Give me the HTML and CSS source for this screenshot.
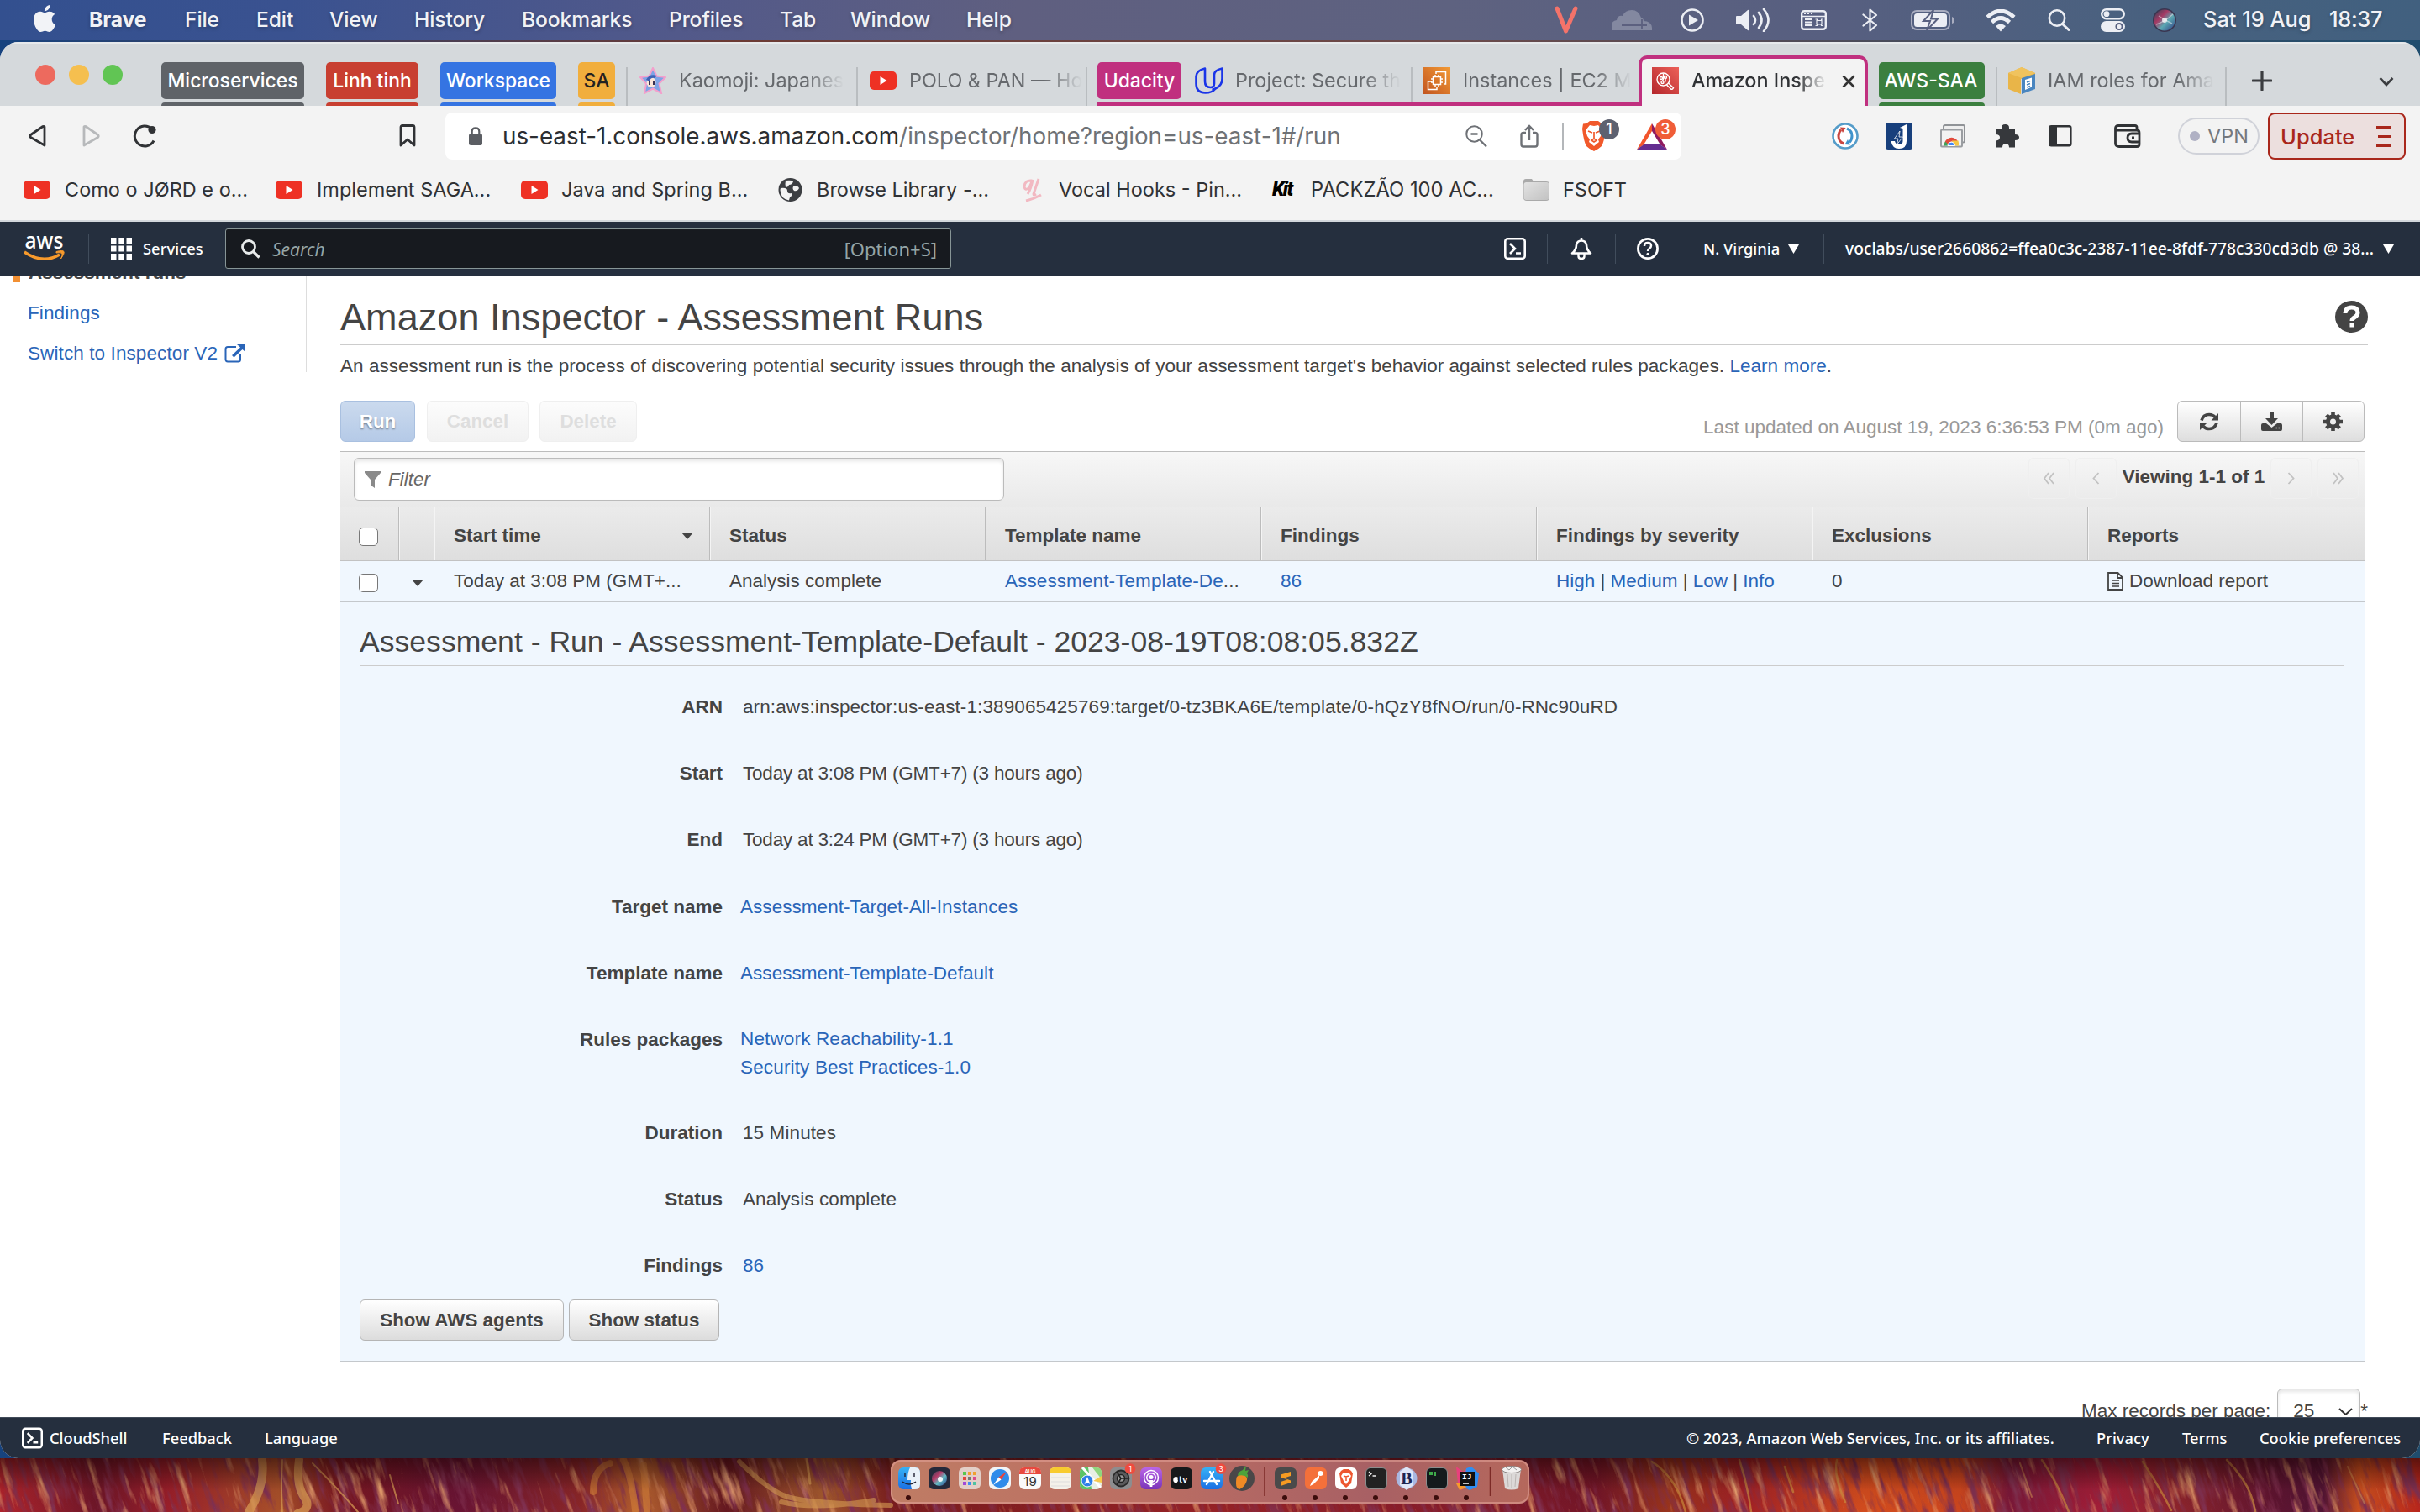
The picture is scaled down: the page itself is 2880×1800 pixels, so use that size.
FILE: index.html
```html
<!DOCTYPE html>
<html lang="en">
<head>
<meta charset="utf-8">
<title>Amazon Inspector</title>
<link rel="stylesheet" href="styles.css">
</head>
<body>
<div class="desktop">

<header class="menubar">
  <nav class="menu-left">
    <svg class="apple" width="26" height="32" viewBox="2.2 0 19.6 24" preserveAspectRatio="none"><path fill="#f2f3f7" d="M12.152 6.896c-.948 0-2.415-1.078-3.96-1.04-2.04.027-3.91 1.183-4.961 3.014-2.117 3.675-.546 9.103 1.519 12.09 1.013 1.454 2.208 3.09 3.792 3.039 1.52-.065 2.09-.987 3.935-.987 1.831 0 2.35.987 3.96.948 1.637-.026 2.676-1.48 3.676-2.948 1.156-1.688 1.636-3.325 1.662-3.415-.039-.013-3.182-1.221-3.22-4.857-.026-3.04 2.48-4.494 2.597-4.559-1.429-2.09-3.623-2.324-4.39-2.376-2-.156-3.675 1.09-4.61 1.09zM15.53 3.83c.843-1.012 1.4-2.427 1.245-3.83-1.207.052-2.662.805-3.532 1.818-.78.896-1.454 2.338-1.273 3.714 1.338.104 2.715-.688 3.559-1.701"/></svg>
    <b>Brave</b><span>File</span><span>Edit</span><span>View</span><span>History</span><span>Bookmarks</span><span>Profiles</span><span>Tab</span><span>Window</span><span>Help</span>
  </nav>
  <div class="menu-right">
    <svg width="28" height="34" viewBox="0 0 28 34"><path d="M3 3 L13.5 30 L25 3" fill="none" stroke="#f4736a" stroke-width="5" stroke-linejoin="round" stroke-linecap="round"/></svg>
    <svg width="48" height="26" viewBox="0 0 48 26"><path d="M0 25V19q0-5 6-6 1-6 7-5Q16 1 24 1t11 9q3 1 3 4 9 0 10 8v3z" fill="#8388a0"/><path d="M12 19h30M36 12v12" stroke="#5c607f" stroke-width="1.800"/></svg>
    <svg width="28" height="28" viewBox="0 0 28 28"><circle cx="14" cy="14" r="12.5" fill="none" stroke="#eceef4" stroke-width="2.6"/><path d="M10 7.5l11 6.5-11 6.500z" fill="#eceef4"/></svg>
    <svg width="41" height="28" viewBox="0 0 41 28"><path d="M0 10q0-1 1-1h5l8-7q2-1 2 1v22q0 2-2 1l-8-7H1q-1 0-1-1z" fill="#eceef4"/><path d="M21 9q4 5 0 10M27 5q7 9 0 18M33 1q11 13 0 26" fill="none" stroke="#eceef4" stroke-width="2.6" stroke-linecap="round"/></svg>
    <svg width="31" height="24" viewBox="0 0 31 24"><rect x="1.200" y="1.200" width="28.600" height="21.600" rx="3" fill="none" stroke="#eceef4" stroke-width="2.4"/><path d="M1 7.500h29" stroke="#eceef4" stroke-width="1.500"/><path d="M4 4h2M8 4h2M12 4h2" stroke="#eceef4" stroke-width="2"/><path d="M5 11h9M5 14.500h9M5 18h9" stroke="#eceef4" stroke-width="1.800"/><path d="M19 12.500h6v4.500h-6zM17.500 11h2v2M26.500 11h-2v2M17.500 18.500h2v-2M26.500 18.500h-2v-2" fill="none" stroke="#eceef4" stroke-width="1.200"/></svg>
    <svg width="19" height="28" viewBox="0 0 19 28"><path d="M1.500 7.500L17 20l-7.500 6.500v-25L17 8 1.500 20.500" fill="none" stroke="#eceef4" stroke-width="2.200" stroke-linejoin="round" stroke-linecap="round"/></svg>
    <svg width="52" height="24" viewBox="0 0 52 24"><rect x="1" y="1" width="45" height="22" rx="6" fill="none" stroke="#a9adc0" stroke-width="2"/><rect x="4" y="4" width="39" height="16" rx="3.500" fill="#eceef4"/><path d="M49 8q3 1 3 4t-3 4z" fill="#a9adc0"/><path d="M27 0L15 13h8l-4 11L32 10.500h-8z" fill="#eceef4" stroke="#586080" stroke-width="2"/></svg>
    <svg width="36" height="27" viewBox="0 0 36 27"><path d="M2 9.500q16-15 32 0M7.500 15.500q10.500-10 21 0" fill="none" stroke="#eceef4" stroke-width="4.600"/><path d="M12 20q6-5 12 0l-6 6.500z" fill="#eceef4"/></svg>
    <svg width="27" height="26" viewBox="0 0 27 26"><circle cx="11" cy="10.500" r="9.200" fill="none" stroke="#eceef4" stroke-width="2.600"/><path d="M17.500 17.500l7.500 7" stroke="#eceef4" stroke-width="3" stroke-linecap="round"/></svg>
    <svg width="29" height="28" viewBox="0 0 29 28"><rect x="1.200" y="1.200" width="26.600" height="11" rx="5.500" fill="none" stroke="#eceef4" stroke-width="2.400"/><circle cx="7" cy="6.700" r="3.400" fill="#eceef4"/><rect x="0" y="15" width="29" height="13" rx="6.500" fill="#eceef4"/><circle cx="22" cy="21.500" r="3.600" fill="none" stroke="#566080" stroke-width="2"/></svg>
    <svg width="28" height="28" viewBox="0 0 28 28"><defs><linearGradient id="siri" x1="0" y1="0" x2="1" y2="1"><stop offset="0" stop-color="#2a4456"/><stop offset=".35" stop-color="#b93a68"/><stop offset=".6" stop-color="#62bcc4"/><stop offset="1" stop-color="#2a3b8c"/></linearGradient></defs><circle cx="14" cy="14" r="14" fill="#3a3550"/><circle cx="14" cy="14" r="12.500" fill="url(#siri)" opacity=".85"/><path d="M4 19q10-3 20-12M7 9q7 5 16 9" stroke="#fff" stroke-width="1.400" fill="none" opacity=".45"/><circle cx="14" cy="14" r="3" fill="#fff" opacity=".75"/></svg>
    <span>Sat 19 Aug</span><span class="clock">18:37</span>
  </div>
</header>

<main class="window">
  <div class="tabstrip">
    <div class="lights"><i class="red"></i><i class="yellow"></i><i class="green"></i></div>
    <div class="groups">
      <div class="chip gray w170"><span>Microservices</span></div>
      <div class="chip crimson w110"><span>Linh tinh</span></div>
      <div class="chip blue w138"><span>Workspace</span></div>
      <div class="chip amber w44"><span>SA</span></div>
    </div>
    <div class="tab">
      <svg width="32" height="32" viewBox="0 0 32 32"><path d="M16 1l4.500 9.500L31 12l-7.500 7.500L26 31l-10-5.500L6 31l2-11.500L1 12l10.500-1.500z" fill="#7fa4e6" stroke="#f3a0cc" stroke-width="2"/><ellipse cx="14" cy="18" rx="5.500" ry="6" fill="#fbe6da"/><path d="M8 15q4-8 13-5l-3 3q-5-1-6 4z" fill="#3f62b5"/><path d="M12 17v4M17 17v4" stroke="#3a3050" stroke-width="2"/></svg>
      <span class="tab-text">Kaomoji: Japanes</span>
    </div>
    <div class="tab last">
      <svg class="yt" width="32" height="22" viewBox="0 0 32 22"><rect width="32" height="22" rx="5" fill="#ee3124"/><path d="M12.500 6l8 5-8 5z" fill="#fff"/></svg>
      <span class="tab-text">POLO &amp; PAN — Ho</span>
    </div>
    <div class="group-open">
      <div class="chip magenta w100"><span>Udacity</span></div>
      <div class="tab plain">
        <svg width="34" height="32" viewBox="0 0 34 32"><path d="M12 1.500Q1.500 4 1.500 11v8.500q0 11 11 11 8 0 12-5 8-3.500 8-12V1.500Q23 3.500 23 9v10.500q0 4.500-4.500 4.500-6.500 0-6.500-7zM24.500 25.500q-2 1-4 1.500" fill="none" stroke="#1a35e8" stroke-width="2.600" stroke-linejoin="round"/></svg>
        <span class="tab-text">Project: Secure th</span>
      </div>
      <div class="tab ec2">
        <svg width="32" height="32" viewBox="0 0 32 32"><defs><linearGradient id="ec" x1="0" y1="1" x2="1" y2="0"><stop offset="0" stop-color="#c2551f"/><stop offset="1" stop-color="#f29a35"/></linearGradient></defs><rect width="32" height="32" fill="url(#ec)"/><g fill="none" stroke="#fff" stroke-width="1.500"><rect x="11.500" y="11.500" width="9" height="9"/><path d="M14 9v2M18 9v2M14 21v2M18 21v2M9 14h2M9 18h2M21 14h2M21 18h2M15 8V5.500h11.500V20H24M10 17H5.500v9.500H16V24"/></g></svg>
        <span class="tab-text">Instances | EC2 M</span>
      </div>
    </div>
    <div class="tab-active">
      <svg width="32" height="32" viewBox="0 0 32 32"><defs><linearGradient id="ins" x1="0" y1="1" x2="1" y2="0"><stop offset="0" stop-color="#b4262b"/><stop offset="1" stop-color="#ec6058"/></linearGradient></defs><rect width="32" height="32" fill="url(#ins)"/><g fill="none" stroke="#fff" stroke-width="1.400"><circle cx="13.500" cy="14.500" r="7.500"/><circle cx="11" cy="13" r="1.500"/><circle cx="16" cy="12" r="1.500"/><circle cx="12.500" cy="18" r="1.500"/><path d="M13.500 7.500v6.500l-1 2.500M16 13.500v4M19.500 19l6 5.500q-1 2.500-3 1.500l-5-5"/></g></svg>
      <span class="tab-text">Amazon Inspe</span>
      <svg class="close" width="16" height="16" viewBox="0 0 16 16"><path d="M1.500 1.500l13 13M14.500 1.500l-13 13" stroke="#333" stroke-width="2.600"/></svg>
    </div>
    <div class="chip green-c w126"><span>AWS-SAA</span></div>
    <div class="tab last iam">
      <svg width="32" height="32" viewBox="0 0 32 32"><path d="M0 7L16 0l16 7v3L15 14v18L0 26z" fill="#e9b548"/><path d="M16 0l16 7-16 6L0 7z" fill="#f0c35e"/><path d="M16 13l16-5v18l-16 6z" fill="#4a86c0"/><path d="M20 15l8-2.500v11L20 27z" fill="#fff"/><path d="M22 18l4-1.500M22 21l4-1.500M22 24l4-1.500" stroke="#4a86c0" stroke-width="1.500"/></svg>
      <span class="tab-text">IAM roles for Ama</span>
    </div>
    <svg class="plus" width="24" height="24" viewBox="0 0 24 24"><path d="M12 1v22M1 12h22" stroke="#3b3d40" stroke-width="3.200" stroke-linecap="round"/></svg>
    <svg class="chev" width="18" height="12" viewBox="0 0 18 12"><path d="M1.500 2L9 10l7.500-8" fill="none" stroke="#3b3d40" stroke-width="2.600"/></svg>
  </div>

  <div class="toolbar">
    <div class="nav-icons">
      <svg width="21" height="28" viewBox="0 0 21 28"><path d="M19 3v22L2.500 15.500q-1.500-1.500 0-3L17 2.500q2-.5 2 1z" fill="none" stroke="#303235" stroke-width="2.800" stroke-linejoin="round"/></svg>
      <svg width="21" height="28" viewBox="0 0 21 28"><path d="M2 3v22l16.500-9.500q1.500-1.500 0-3L4 2.500q-2-.5-2 1z" fill="none" stroke="#b7b9bb" stroke-width="2.800" stroke-linejoin="round"/></svg>
      <svg width="28" height="28" viewBox="0 0 28 28"><path d="M25 19.500A12 12 0 1 1 22.500 5.200" fill="none" stroke="#303235" stroke-width="3"/><circle cx="23" cy="6.500" r="4.600" fill="#303235"/></svg>
      <svg class="bm" width="20" height="28" viewBox="0 0 20 28"><path d="M2 3.500q0-2 2-2h12q2 0 2 2V25l-8-7-8 7z" fill="none" stroke="#303235" stroke-width="2.800" stroke-linejoin="round"/></svg>
    </div>
    <div class="address">
      <svg width="16" height="22" viewBox="0 0 16 22"><rect y="8" width="16" height="14" rx="2.500" fill="#5b5e63"/><path d="M3.700 9V5.500q0-4.200 4.300-4.200t4.300 4.200V9" fill="none" stroke="#5b5e63" stroke-width="2.200"/></svg>
      <div class="url"><span class="host">us-east-1.console.aws.amazon.com</span>/inspector/home?region=us-east-1#/run</div>
      <div class="addr-icons">
        <svg width="26" height="27" viewBox="0 0 26 27"><circle cx="10.500" cy="10.500" r="9.300" fill="none" stroke="#6e7176" stroke-width="2"/><path d="M6.500 10.500h8M17 17.500l8 8" stroke="#6e7176" stroke-width="2.400"/></svg>
        <svg width="22" height="28" viewBox="0 0 22 28"><path d="M7 10H4q-2.500 0-2.500 2.500V24q0 2.500 2.500 2.500h14q2.500 0 2.500-2.500V12.500Q20.500 10 18 10h-3M11 19V2M6 7l5-5 5 5" fill="none" stroke="#6e7176" stroke-width="2.400"/></svg>
        <i class="vline"></i>
        <div class="badged">
          <svg width="28" height="36" viewBox="0 0 28 36"><path d="M5 3l4-3h10l4 3 4 .5 1 6q-2 16-5 20.500Q20 33 14 36 8 33 5 30 2 25.500 0 9.500l1-6z" fill="#f1592b"/><path d="M14 6l5-1 5 6-2 7-3 4 1 3-6 5-6-5 1-3-3-4-2-7 5-6z" fill="#fff"/><path d="M7 12l5 2M21 12l-5 2M14 13v8l-3 2 3 2 3-2-3-2" stroke="#f1592b" stroke-width="1.700" fill="none"/></svg>
          <b class="badge slate">1</b>
        </div>
        <div class="badged tri">
          <svg width="36" height="32" viewBox="0 0 36 32"><path d="M18 1L0 32l8-5.500L18 10z" fill="#f2552c"/><path d="M18 1l18 31-8-5.500L18 10z" fill="#8f1a5f"/><path d="M0 32l9-6.500h18L36 32z" fill="#652d90"/></svg>
          <b class="badge orange">3</b>
        </div>
      </div>
    </div>
    <div class="ext">
      <svg width="32" height="32" viewBox="0 0 32 32"><circle cx="16" cy="16" r="14.500" fill="#fff" stroke="#559cc9" stroke-width="2.600"/><path d="M14 25q-6-2.500-6-9 0-4.500 3-7.500" fill="none" stroke="#c9453f" stroke-width="3"/><path d="M10 5.500l6.500.5-3.500 6z" fill="#c9453f"/><path d="M18 7q6 2.500 6 9 0 4.500-3 7.500" fill="none" stroke="#3f93cc" stroke-width="3"/><path d="M22 26.500l-6.500-.5 3.500-6z" fill="#3f93cc"/></svg>
      <svg width="32" height="32" viewBox="0 0 32 32"><rect width="32" height="32" rx="3" fill="#173f7c"/><path d="M17 6l8-4v20q0 9-9 9-8 0-9.500-9H11q1 4 5 4 4.500 0 4.500-4V7z" fill="#fff"/><path d="M17 10l-6.500 9h4.500l-1.500 7 7-9h-4.500z" fill="#173f7c" stroke="#fff" stroke-width=".8"/></svg>
      <svg width="31" height="28" viewBox="0 0 31 28"><path d="M4 6V2.500Q4 1 6 1h21.500Q29 1 29 3v17q0 1.500-2 1.500h-1" fill="#eee" stroke="#909397" stroke-width="2"/><rect x="1" y="6.500" width="25" height="20" rx="1" fill="#f2f2f2" stroke="#9a9da1" stroke-width="2"/><path d="M5 25.500a8.500 8.500 0 0 1 16-5H13z" fill="#e24b3c"/><path d="M4.800 25.500q0-3 1.200-5l5 5z" fill="#3ba55a"/><path d="M14 19.500h7.500q1 3 .3 6H15z" fill="#f6c643"/><path d="M9 25.500a4.200 4.200 0 0 1 8.500 0z" fill="#4285f4" stroke="#fff" stroke-width="1"/></svg>
      <svg width="29" height="28" viewBox="0 0 29 28"><path d="M1 5h7q-.5-5 4.500-5T17 5h7v7q5 0 5 3.500T24 19v8.500h-7q0-4.500-4-4.500t-4 4.500H1.500v-8Q6 19 6 15.500T1 12z" fill="#36383c"/></svg>
      <svg width="28" height="26" viewBox="0 0 28 26"><rect x="1.300" y="1.300" width="25" height="23" rx="2" fill="none" stroke="#303235" stroke-width="2.600"/><path d="M2 2h8v22H2z" fill="#303235"/></svg>
      <svg width="32" height="28" viewBox="0 0 32 28"><path d="M27 6V3.500q0-2-2-2H5q-3.500 0-3.500 3T5 7h22q3 0 3 3v14q0 2.500-3 2.500H6q-4.500 0-4.500-4V4.500M30 11h-9q-5 0-5 5t5 5h9M21 16h3" fill="none" stroke="#303235" stroke-width="2.800"/></svg>
    </div>
    <div class="vpn"><i></i>VPN</div>
    <div class="update"><span>Update</span><svg width="17" height="25" viewBox="0 0 17 25"><path d="M0 1.500h17M2 12.500h15M0 23.500h17" stroke="#a9271b" stroke-width="3"/></svg></div>
  </div>

  <div class="bookmarks">
    <svg width="32" height="22" viewBox="0 0 32 22"><rect width="32" height="22" rx="5" fill="#ee3124"/><path d="M12.500 6l8 5-8 5z" fill="#fff"/></svg><span>Como o JØRD e o...</span>
    <svg width="32" height="22" viewBox="0 0 32 22"><rect width="32" height="22" rx="5" fill="#ee3124"/><path d="M12.500 6l8 5-8 5z" fill="#fff"/></svg><span>Implement SAGA...</span>
    <svg width="32" height="22" viewBox="0 0 32 22"><rect width="32" height="22" rx="5" fill="#ee3124"/><path d="M12.500 6l8 5-8 5z" fill="#fff"/></svg><span>Java and Spring B...</span>
    <svg width="29" height="28" viewBox="0 0 29 28"><circle cx="14.500" cy="14" r="14" fill="#3c3e42"/><path d="M3 12q8-1 8 3t5 3q1 3-2 5-1 3-1 3.500Q3 25 2.500 14zM9 3q7-1 9 1-1 4-5 4-1 3-4 3-1-4 0-8zM19 9q5 0 6 3-2 4-6 3-3-3 0-6z" fill="#f3f3f3"/></svg><span>Browse Library -...</span>
    <svg width="24" height="28" viewBox="0 0 24 28"><path d="M11 3q-8-1-9 7 1 6 6 1l4-9q-2 11-6 17M19 1l-6 18q0 2 3 0M4 27q9-2 18-7" fill="none" stroke="#f2b9c2" stroke-width="3"/></svg><span>Vocal Hooks - Pin...</span>
    <span class="kit">Kit</span><span class="pack">PACKZÃO 100 AC...</span>
    <svg width="31" height="26" viewBox="0 0 31 26"><defs><linearGradient id="fo" x1="0" y1="0" x2="1" y2="1"><stop offset="0" stop-color="#e2e2e2"/><stop offset="1" stop-color="#c2c2c2"/></linearGradient></defs><path d="M0 3q0-3 3-3h7l2 3h15q4 0 4 3v16q0 4-4 4H4q-4 0-4-4z" fill="#a9a9a9"/><rect x=".5" y="4" width="30" height="21" rx="3" fill="url(#fo)"/></svg><span>FSOFT</span>
  </div>

  <div class="awsnav">
    <svg class="aws" width="49" height="33" viewBox="0 0 49 33"><text x="24.500" y="15.500" text-anchor="middle" font-family="Noto Sans" font-weight="500" font-size="27" textLength="46" lengthAdjust="spacingAndGlyphs" fill="#fff">aws</text><path d="M1 20q22 15 42 3" fill="none" stroke="#f79a2c" stroke-width="3.400"/><path d="M39 19.500q8-2 9 0t-3.500 8.500q2-4 1.500-6.500-2-1.500-7-.5z" fill="#f79a2c" stroke="#f79a2c" stroke-width="1"/></svg>
    <i class="nsep s1"></i>
    <svg class="grid9" width="25" height="26" viewBox="0 0 25 26"><path fill="#fff" d="M0 0h6.500v7H0zM9.300 0h6.500v7H9.300zM18.500 0H25v7h-6.500zM0 9.500h6.500v7H0zM9.300 9.500h6.500v7H9.300zM18.500 9.500H25v7h-6.500zM0 19h6.500v7H0zM9.300 19h6.500v7H9.300zM18.500 19H25v7h-6.500z"/></svg>
    <span class="services">Services</span>
    <div class="search">
      <svg width="23" height="23" viewBox="0 0 23 23"><circle cx="9" cy="9" r="7.500" fill="none" stroke="#e8ebeb" stroke-width="2.800"/><path d="M14.500 14.500l7 7" stroke="#e8ebeb" stroke-width="3.200"/></svg>
      <em>Search</em><span>[Option+S]</span>
    </div>
    <div class="nav-right">
      <svg width="26" height="26" viewBox="0 0 26 26"><rect x="1.300" y="1.300" width="23.400" height="23.400" rx="3" fill="none" stroke="#fff" stroke-width="2.600"/><path d="M7 7l6 6-6 6M14 18.500h6" fill="none" stroke="#fff" stroke-width="2.600"/></svg>
      <i class="nsep"></i>
      <svg width="26" height="26" viewBox="0 0 26 26"><path d="M13 0v3M2 18.500q5-4 5-10Q8 3.500 13 3.500t6 5q0 6 5 10z" fill="none" stroke="#fff" stroke-width="2.600" stroke-linejoin="round"/><path d="M9.500 19v3q0 3 3.500 3t3.500-3v-3" fill="none" stroke="#fff" stroke-width="2.400"/></svg>
      <i class="nsep"></i>
      <svg width="26" height="26" viewBox="0 0 26 26"><circle cx="13" cy="13" r="11.600" fill="none" stroke="#fff" stroke-width="2.700"/><path d="M9 10q0-4 4-4t4 3.500q0 2-2 3.300T13 16" fill="none" stroke="#fff" stroke-width="2.500"/><circle cx="13" cy="19.300" r="1.500" fill="#fff"/></svg>
      <i class="nsep"></i>
      <span>N. Virginia</span>
      <svg width="13" height="11" viewBox="0 0 13 11"><path d="M0 0h13L6.500 11z" fill="#fff"/></svg>
      <i class="nsep"></i>
      <span class="account">voclabs/user2660862=ffea0c3c-2387-11ee-8fdf-778c330cd3db @ 38...</span>
      <svg width="13" height="11" viewBox="0 0 13 11"><path d="M0 0h13L6.500 11z" fill="#fff"/></svg>
    </div>
  </div>

  <div class="page">
    <aside class="side">
      <div class="side-item current">Assessment runs</div>
      <div class="side-item"><a>Findings</a></div>
      <div class="side-item"><a>Switch to Inspector V2</a><svg width="25" height="22" viewBox="0 0 25 22"><path d="M14 3H4Q1.500 3 1.500 5.500v12Q1.500 20.500 4 20.500h12.500q2.500 0 2.500-2.500v-7" fill="none" stroke="#2a65b8" stroke-width="2"/><path d="M15 0h10v9l-3.500-3-10 9.500-2.500-2.500 10-9.500z" fill="#2a65b8"/></svg></div>
    </aside>

    <section class="content">
      <div class="title-row">
        <h1>Amazon Inspector - Assessment Runs</h1>
        <svg width="39" height="38" viewBox="0 0 39 38"><ellipse cx="19.500" cy="19" rx="19.500" ry="19" fill="#444"/><path d="M12 15q0-7 7.500-7t7.500 6q0 3.500-3.500 5.500t-3.500 4.500" fill="none" stroke="#fff" stroke-width="5"/><rect x="17.500" y="26.500" width="5" height="5" fill="#fff"/></svg>
      </div>
      <p class="desc">An assessment run is the process of discovering potential security issues through the analysis of your assessment target's behavior against selected rules packages. <a>Learn more</a>.</p>

      <div class="actions">
        <button class="btn run">Run</button>
        <button class="btn off cancel">Cancel</button>
        <button class="btn off delete">Delete</button>
        <span class="updated">Last updated on August 19, 2023 6:36:53 PM (0m ago)</span>
        <div class="btn-group">
          <div><svg width="24" height="22" viewBox="0 0 24 22"><path d="M3 9.500Q5 2.500 12 2.500q4.500 0 7 3M21 12.500q-2 7-9 7-4.500 0-7-3" fill="none" stroke="#444" stroke-width="3.600"/><path d="M23 1v8.500h-8.500zM1 21v-8.500h8.500z" fill="#444"/></svg></div>
          <div><svg width="25" height="22" viewBox="0 0 25 22"><path d="M10 0h5v7h5l-7.500 8L5 7h5z" fill="#444"/><path d="M0 15q0-2 2-2h4l6.500 5 6.500-5h4q2 0 2 2v5q0 2-2 2H2q-2 0-2-2z" fill="#444"/><path d="M17.500 18.500h1.500M20.500 18.500h1.500" stroke="#ddd" stroke-width="1.500"/></svg></div>
          <div><svg width="23" height="22" viewBox="-11.500 -11 23 22"><circle r="6" fill="none" stroke="#444" stroke-width="5"/><path d="M0-7.500V-11M0 7.500V11M-7.500 0H-11.500M7.500 0H11.500M5.300-5.300l2.500-2.500M-5.300-5.300l-2.500-2.500M5.300 5.300l2.500 2.500M-5.300 5.300l-2.500 2.500" stroke="#444" stroke-width="4.600"/></svg></div>
        </div>
      </div>

      <div class="table">
        <div class="filterbar">
          <div class="filter"><svg width="19" height="20" viewBox="0 0 19 20"><path d="M0 0h19v2l-7 8v10l-5-3.500V10L0 2z" fill="#8a8a8a"/></svg><em>Filter</em></div>
          <div class="pager">
            <div class="pg"><svg width="15" height="15" viewBox="0 0 15 15"><path d="M7 1L2 7.500 7 14M13 1L8 7.500l5 6.500" fill="none" stroke="#c2c2c2" stroke-width="1.800"/></svg></div>
            <div class="pg"><svg width="15" height="15" viewBox="0 0 15 15"><path d="M10.500 1l-6 6.500 6 6.500" fill="none" stroke="#c2c2c2" stroke-width="1.800"/></svg></div>
            <b>Viewing 1-1 of 1</b>
            <div class="pg"><svg width="15" height="15" viewBox="0 0 15 15"><path d="M4.500 1l6 6.500-6 6.500" fill="none" stroke="#c2c2c2" stroke-width="1.800"/></svg></div>
            <div class="pg"><svg width="15" height="15" viewBox="0 0 15 15"><path d="M2 1l5 6.500L2 14M8 1l5 6.500L8 14" fill="none" stroke="#c2c2c2" stroke-width="1.800"/></svg></div>
          </div>
        </div>
        <div class="row head">
          <div class="check"><i></i></div><div></div>
          <div class="cell">Start time<i class="caret"></i></div><div class="cell">Status</div><div class="cell">Template name</div><div class="cell">Findings</div><div class="cell">Findings by severity</div><div class="cell">Exclusions</div><div class="cell">Reports</div>
        </div>
        <div class="row data">
          <div class="check"><i></i></div><div class="expand"><i class="caret"></i></div>
          <div class="cell today">Today at 3:08 PM (GMT+...</div><div class="cell">Analysis complete</div><div class="cell tmpl"><a>Assessment-Template-De</a>...</div><div class="cell"><a>86</a></div><div class="cell sev"><a>High</a> | <a>Medium</a> | <a>Low</a> | <a>Info</a></div><div class="cell">0</div><div class="cell report"><svg width="19" height="22" viewBox="0 0 19 22"><path d="M1 1h11.500L18 6.500V21H1zM12 1v6h6" fill="none" stroke="#444" stroke-width="1.800"/><path d="M5 10h9M5 13.500h9M5 17h9" stroke="#444" stroke-width="1.600"/></svg>Download report</div>
        </div>
        <div class="detail">
          <h2>Assessment - Run - Assessment-Template-Default - 2023-08-19T08:08:05.832Z</h2>
          <dl>
            <div class="pair"><dt>ARN</dt><dd>arn:aws:inspector:us-east-1:389065425769:target/0-tz3BKA6E/template/0-hQzY8fNO/run/0-RNc90uRD</dd></div>
            <div class="pair"><dt>Start</dt><dd class="time">Today at 3:08 PM (GMT+7) (3 hours ago)</dd></div>
            <div class="pair"><dt>End</dt><dd class="time">Today at 3:24 PM (GMT+7) (3 hours ago)</dd></div>
            <div class="pair"><dt>Target name</dt><dd class="out"><a>Assessment-Target-All-Instances</a></dd></div>
            <div class="pair"><dt>Template name</dt><dd class="out"><a>Assessment-Template-Default</a></dd></div>
            <div class="pair rules"><dt>Rules packages</dt><dd class="out"><a>Network Reachability-1.1</a><br><a>Security Best Practices-1.0</a></dd></div>
            <div class="pair"><dt>Duration</dt><dd>15 Minutes</dd></div>
            <div class="pair"><dt>Status</dt><dd>Analysis complete</dd></div>
            <div class="pair end"><dt>Findings</dt><dd><a>86</a></dd></div>
          </dl>
          <div class="detail-actions"><button class="btn std agents">Show AWS agents</button><button class="btn std status">Show status</button></div>
        </div>
      </div>
      <div class="records"><span>Max records per page:</span><div class="select">25<svg width="17" height="9" viewBox="0 0 17 9"><path d="M1 1l7.500 7L16 1" fill="none" stroke="#333" stroke-width="2"/></svg></div><span>*</span></div>
    </section>
  </div>

  <footer class="foot">
    <svg width="25" height="26" viewBox="0 0 26 26"><rect x="1.300" y="1.300" width="23.400" height="23.400" rx="3" fill="none" stroke="#fff" stroke-width="2.600"/><path d="M7 7l6 6-6 6M14 18.500h6" fill="none" stroke="#fff" stroke-width="2.600"/></svg>
    <span>CloudShell</span><span>Feedback</span><span>Language</span>
    <span class="copy">© 2023, Amazon Web Services, Inc. or its affiliates.</span><span>Privacy</span><span>Terms</span><span>Cookie preferences</span>
  </footer>
</main>

<div class="wallpaper">
  <svg class="paint" width="2880" height="64" viewBox="0 0 2880 64">
    <defs>
      <linearGradient id="base" x1="0" x2="1" y1="0" y2="0">
        <stop offset="0" stop-color="#b0242c"/><stop offset=".04" stop-color="#6e1628"/><stop offset=".07" stop-color="#9a1f2a"/><stop offset=".115" stop-color="#a8502a"/><stop offset=".14" stop-color="#7a1822"/><stop offset=".19" stop-color="#6a1434"/><stop offset=".24" stop-color="#8a2628"/><stop offset=".265" stop-color="#b3602f"/><stop offset=".3" stop-color="#661820"/><stop offset=".34" stop-color="#a2582e"/><stop offset=".37" stop-color="#7a1c1e"/><stop offset=".5" stop-color="#962226"/><stop offset=".6" stop-color="#861c2a"/><stop offset=".66" stop-color="#741628"/><stop offset=".69" stop-color="#9a341c"/><stop offset=".72" stop-color="#a02026"/><stop offset=".77" stop-color="#d24c1e"/><stop offset=".81" stop-color="#cc461e"/><stop offset=".83" stop-color="#7a1838"/><stop offset=".87" stop-color="#a51e38"/><stop offset=".9" stop-color="#8c242c"/><stop offset=".94" stop-color="#5e1430"/><stop offset=".96" stop-color="#521434"/><stop offset=".975" stop-color="#cc501e"/><stop offset="1" stop-color="#b8261c"/>
      </linearGradient>
      <linearGradient id="shade" x1="0" x2="0" y1="0" y2="1"><stop offset="0" stop-color="#100" stop-opacity=".55"/><stop offset=".6" stop-color="#100" stop-opacity=".05"/><stop offset="1" stop-color="#100" stop-opacity="0"/></linearGradient>
      <filter id="fib" x="0" y="0" width="1" height="1"><feTurbulence type="fractalNoise" baseFrequency=".09 .016" numOctaves="4" seed="4"/><feColorMatrix values="0 0 0 0 .82  0 0 0 0 .36  0 0 0 0 .16  3 0 0 0 -1.680"/></filter>
      <filter id="dark" x="0" y="0" width="1" height="1"><feTurbulence type="fractalNoise" baseFrequency=".1 .02" numOctaves="4" seed="11"/><feColorMatrix values="0 0 0 0 .22  0 0 0 0 .03  0 0 0 0 .08  0 3.400 0 0 -1.600"/></filter>
    </defs>
    <rect width="2880" height="64" fill="url(#base)"/>
    <g transform="skewX(18)"><rect x="-40" width="2960" height="64" filter="url(#dark)"/><rect x="-40" width="2960" height="64" filter="url(#fib)"/></g>
    <g fill="none" stroke="#dba055" stroke-linecap="round">
      <path d="M312 2q4 30-16 62M356 2q-4 30 6 44t-8 20" stroke-width="10" opacity=".7"/>
      <path d="M336 2q-2 30 0 64M372 6q30 30 54 58M464 20l10 34" stroke-width="2" opacity=".7"/>
      <path d="M706 40q0-28 20-34M742 2q10 20 14 60M766 8l4 56" stroke-width="8" stroke="#d07a38" opacity=".7"/>
      <path d="M880 4q30 30 52 40t128 12M930 52q40 10 110 -2" stroke-width="6" opacity=".6"/>
      <path d="M960 0l4 30" stroke-width="3" opacity=".7"/>
      <path d="M1966 4q30 20 40 60M2070 2q10 30 14 62M2124 10l10 30M2186 2q-4 20 10 50M2430 2q20 30 32 62M2550 4q20 30 34 58M2650 2q30 30 34 62" stroke-width="2.500" stroke="#cf923f" opacity=".65"/>
      <path d="M2404 6l14 40M2794 10l20 44" stroke-width="2" opacity=".5"/>
    </g>
    <rect width="2880" height="64" fill="url(#shade)"/>
  </svg>
  <div class="dock">
    <svg width="760" height="52" viewBox="1060 1738 760 52">
      <defs>
        <linearGradient id="gb" x1="0" x2="0" y1="0" y2="1"><stop offset="0" stop-color="#35b1f5"/><stop offset="1" stop-color="#1c6fe3"/></linearGradient>
        <linearGradient id="gp" x1="0" x2="0" y1="0" y2="1"><stop offset="0" stop-color="#b965e8"/><stop offset="1" stop-color="#7a34b8"/></linearGradient>
      </defs>
      <g transform="translate(1069 1747)"><rect width="26" height="26" rx="6" fill="url(#gb)"/><path d="M14 0h6q6 0 6 6v14q0 6-6 6h-4q-2-6-1-11h-4q0-9 3-15z" fill="#e9f1f8"/><path d="M8 7v4M19 7v4M5 17q8 6 16 0" stroke="#223" stroke-width="1.400" fill="none"/></g>
      <g transform="translate(1105 1747)"><rect width="26" height="26" rx="6" fill="#25293a"/><circle cx="13" cy="13" r="9" fill="url(#siri)"/><circle cx="14" cy="14" r="3" fill="#fff" opacity=".9"/></g>
      <g transform="translate(1141 1747)"><rect width="26" height="26" rx="6" fill="#e3cfc8"/><path d="M5 5h4v4H5z" fill="#57c84d"/><path d="M11 5h4v4h-4z" fill="#f39c2d"/><path d="M17 5h4v4h-4z" fill="#f0a030"/><path d="M5 11h4v4H5z" fill="#e3463c"/><path d="M11 11h4v4h-4z" fill="#777"/><path d="M17 11h4v4h-4z" fill="#dc4b8a"/><path d="M5 17h4v4H5z" fill="#a24ad8"/><path d="M11 17h4v4h-4z" fill="#3f8ef0"/><path d="M17 17h4v4h-4z" fill="#4fc3a0"/></g>
      <g transform="translate(1177 1747)"><rect width="26" height="26" rx="6" fill="#f2f4f6"/><circle cx="13" cy="13" r="11" fill="#2f8bea"/><path d="M21 5l-6.500 9.500-3-3z" fill="#ee4237"/><path d="M5 21l6.500-9.500 3 3z" fill="#fff"/></g>
      <g transform="translate(1213 1747)"><rect width="26" height="26" rx="6" fill="#fafafa"/><path d="M0 8V6q0-6 6-6h14q6 0 6 6v2z" fill="#e8493f"/><text x="13" y="6.800" font-family="Inter" font-weight="600" font-size="6" text-anchor="middle" fill="#fff">AUG</text><text x="13" y="22" font-family="Inter" font-size="15" text-anchor="middle" fill="#333">19</text></g>
      <g transform="translate(1249 1747)"><rect width="26" height="26" rx="6" fill="#f4f1ea"/><path d="M0 7V6q0-6 6-6h14q6 0 6 6v1z" fill="#f8cb2e"/><path d="M2 12h22M2 17h22M2 22h22" stroke="#ddd" stroke-width="1"/></g>
      <g transform="translate(1285 1747)"><rect width="26" height="26" rx="6" fill="#e8efe4"/><path d="M0 6q0-6 6-6h4l4 26H6q-6 0-6-6z" fill="#5cc466"/><path d="M15 0h5q6 0 6 6v8z" fill="#8fd67d"/><path d="M3 0l22 24" stroke="#fff" stroke-width="3"/><path d="M16 16l10-6v8z" fill="#f6c94c"/><circle cx="9" cy="16" r="7" fill="#2d7fe8" stroke="#fff"/><path d="M9 11l3.500 9-3.500-2-3.500 2z" fill="#fff"/></g>
      <g transform="translate(1321 1747)"><rect width="26" height="26" rx="6" fill="#8d8d8f"/><circle cx="13" cy="13" r="9.500" fill="#5a5a5c" stroke="#2a2a2a" stroke-width="1.800"/><circle cx="13" cy="13" r="4.500" fill="#999" stroke="#222" stroke-width="1.500"/><path d="M13 13L8 5M13 13h9M13 13l-5 8" stroke="#222" stroke-width="1.500"/></g>
      <circle cx="1345" cy="1748.500" r="6.300" fill="#ee4b3f"/><text x="1345" y="1752" font-family="Inter" font-size="9" text-anchor="middle" fill="#fff">1</text>
      <g transform="translate(1357 1747)"><rect width="26" height="26" rx="6" fill="url(#gp)"/><circle cx="13" cy="12" r="8.500" fill="none" stroke="#fff" stroke-width="1.500"/><circle cx="13" cy="12" r="5.300" fill="none" stroke="#fff" stroke-width="1.500"/><circle cx="13" cy="11.500" r="2.500" fill="#fff"/><path d="M11 15h4l-.7 8h-2.600z" fill="#fff"/></g>
      <g transform="translate(1393 1747)"><rect width="26" height="26" rx="6" fill="#16181a"/><path d="M4 12q2.500-2 5 0-1 2 0 4-2 4-4 2-3-2-1-6z" fill="#fff"/><text x="10" y="17.500" font-family="Inter" font-weight="600" font-size="11" fill="#fff">tv</text></g>
      <g transform="translate(1429 1747)"><rect width="26" height="26" rx="6" fill="url(#gb)"/><path d="M15 5L7 20M11 5l8 15M4 16h18" stroke="#fff" stroke-width="2.400" stroke-linecap="round"/></g>
      <circle cx="1453" cy="1748.500" r="6.300" fill="#ee4b3f"/><text x="1453" y="1752" font-family="Inter" font-size="9" text-anchor="middle" fill="#fff">3</text>
      <circle cx="1478" cy="1760" r="15" fill="#4a4748"/><path d="M1472 1758q4-4 9-2 5 3 2 9-3 6-8 8-4-1-4-7t1-8z" fill="#f08a24"/><path d="M1473 1757q0-5 6-7l4-5-1 6 4-1-2 4q2 2 1 5-5-4-12-2z" fill="#4fa33a"/>
      <path d="M1505 1746v35M1773.500 1746v35" stroke="#7c2a26" stroke-width="1.500"/>
      <g transform="translate(1517 1747)"><rect width="26" height="26" rx="6" fill="#4a4a4a"/><path d="M19 5v5L11 12.500l8 3V18L7 22v-5l8-2.500-8-3V8.500z" fill="#f79b22"/></g>
      <g transform="translate(1553 1747)"><rect width="26" height="26" rx="6" fill="#f4703a"/><circle cx="18.500" cy="7" r="3" fill="#fff"/><path d="M17 9L8 17l-2 5 4-2 7-7z" fill="#fff"/></g>
      <g transform="translate(1589 1747)"><rect width="26" height="26" rx="6" fill="#fff"/><path d="M7 4l3-2h6l3 2 2 3-2 12-6 5-6-5L5 7z" fill="#ee5730"/><path d="M9 7h8l2 3-3 6-3 4-3-4-3-6z" fill="#fff"/><path d="M10 10l3 1 3-1M13 11v5" stroke="#ee5730" stroke-width="1.500" fill="none"/></g>
      <g transform="translate(1625 1747)"><rect x=".5" y=".5" width="25" height="25" rx="5.500" fill="#222" stroke="#8d8d8d"/><path d="M4 5l3 2.500-3 2.500M8.500 10h4" stroke="#eee" fill="none" stroke-width="1.300"/></g>
      <g transform="translate(1661 1746)"><circle cx="13" cy="14" r="12.500" fill="#a9b7e0"/><path d="M13 0l8 6v16l-8 6-8-6V6z" fill="#dfe6f7"/><text x="13" y="21" font-family="Liberation Serif" font-weight="700" font-size="20" text-anchor="middle" fill="#1d2450">B</text></g>
      <g transform="translate(1697 1747)"><rect x=".5" y=".5" width="25" height="25" rx="5.500" fill="#141a1c" stroke="#8d8d8d"/><path d="M4 5h4v4H4zM9 5h3v5H9z" fill="#3ea84a"/></g>
      <g transform="translate(1733 1746)"><path d="M0 0l8 6 6-4v20l-8 6L2 20z" fill="#e8407c"/><path d="M12 2l6-2 9 8-2 16-9 4-8-4z" fill="#2f8ef2"/><path d="M0 20l8-2 4 7-8 3z" fill="#f79a2c"/><rect x="5" y="6" width="17" height="17" fill="#111"/><text x="7" y="15" font-family="Liberation Mono" font-weight="700" font-size="9.500" fill="#fff">IJ</text><path d="M8 20h7" stroke="#fff" stroke-width="1.400"/></g>
      <g transform="translate(1787 1745)"><path d="M1 4h22l-3 23q-8 3-16 0z" fill="#dcd9d8"/><ellipse cx="12" cy="4.500" rx="11.500" ry="4" fill="#f3f1f0" stroke="#8b8583"/><path d="M5 2l4 3 4-4 5 4" stroke="#999" fill="none"/><path d="M7 10l1 15M12 10v16M17 10l-1 15" stroke="#bbb5b3"/></g>
      <g fill="#3c0d0c"><circle cx="1081" cy="1783" r="3"/><circle cx="1529" cy="1783" r="3"/><circle cx="1565" cy="1783" r="3"/><circle cx="1601" cy="1783" r="3"/><circle cx="1637" cy="1783" r="3"/><circle cx="1673" cy="1783" r="3"/><circle cx="1709" cy="1783" r="3"/><circle cx="1745" cy="1783" r="3"/></g>
    </svg>
  </div>
</div>

</div>
</body>
</html>
```
FILE: styles.css
```css
*{box-sizing:border-box}
body{margin:0;width:2880px;height:1800px;overflow:hidden;font-family:"Liberation Sans",Arial,sans-serif;font-size:22.5px;color:#444}
svg{display:block;flex:none}
i{display:block;flex:none}
a{color:#2a65b8}
h1,h2,p,dl,dd,dt{margin:0;font-weight:400}
.desktop{width:2880px;height:1800px;display:flex;flex-direction:column;background:linear-gradient(90deg,#17437f,#6b3a34 30%,#6b4a4a 60%,#1f4d6e)}

/* macOS menu bar */
.menubar{height:48px;margin-bottom:2px;display:flex;justify-content:space-between;background:linear-gradient(90deg,#33508f,#3a5290 12%,#52598a 28%,#5f5f80 42%,#5e6280 60%,#575f80 76%,#47617f 90%,#41607f);color:#f1f2f6;font:500 24.6px/48px Inter,sans-serif;text-shadow:0 2px 4px rgba(0,0,0,.25);white-space:nowrap}
.menu-left{display:grid;grid-template-columns:66px 114px 85px 87px 101px 128px 175px 132px 84px 138px 90px;padding-left:40px}
.menu-left span,.menu-left b{padding-bottom:2px;line-height:46px;letter-spacing:-.1px}
.menu-left b{font-weight:700}
.apple{margin-top:6px}
.menu-right{display:grid;grid-template-columns:68px 82px 66px 77px 73px 58px 89px 74px 63px 62px 60px 150px 108px;align-items:center}
.menu-right span{font-size:25.4px;line-height:46px;padding-bottom:2px}
.menu-right .clock{letter-spacing:-.3px}

/* browser window */
.window{height:1686px;display:flex;flex-direction:column;border-radius:22px;overflow:hidden;background:#f3f3f3}
.tabstrip{height:76px;background:#d5d9dc;display:flex;font:400 23.4px/44px Inter,sans-serif;color:#66696d;white-space:nowrap;box-shadow:inset 0 2px 0 #e6e9eb}
.lights{display:flex;gap:16px;margin:27px 46px 0 42px}
.lights i{width:24px;height:24px;border-radius:50%}
.red{background:#ed6a5e}.yellow{background:#f5bf4f}.green{background:#61c554}
.groups{display:flex;gap:26px;margin-right:13px}
.chip{margin-top:24px;height:52px;display:flex;flex-direction:column;justify-content:space-between;color:#fff;font-weight:500;font-size:22.9px;flex:none}
.chip span{height:44px;border-radius:5px;text-align:center;background:var(--c)}
.chip::after{content:"";height:4px;border-radius:4px 4px 0 0;background:var(--c)}
.gray{--c:#5f6368}.crimson{--c:#c83f31}.blue{--c:#3574e2}.amber{--c:#f1ae3d;color:#222}.magenta{--c:#c0307f}.green-c{--c:#3b7f3f}
.w170{width:170px}.w110{width:110px}.w138{width:138px}.w44{width:44px}.w100{width:100px}.w126{width:126px;font-size:23px;margin-right:13px}
.w126 span{padding-right:2px}
.tab{width:274px;height:46px;margin-top:30px;padding-left:14px;display:flex;border-left:2px solid #b9bdc0;flex:none}
.tab>svg.yt{margin-top:5px}
.tab.last{border-right:2px solid #b9bdc0;width:275px;margin-right:12px}
.tab-text{margin-left:15px;margin-top:-6px;overflow:hidden;-webkit-mask-image:linear-gradient(90deg,#000 78%,transparent);mask-image:linear-gradient(90deg,#000 78%,transparent)}
.group-open{width:644px;display:flex;box-shadow:inset 0 -4px 0 #c0307f;flex:none}
.tab.plain{border-left:0;width:273px;padding-left:16px}
.tab.plain .tab-text{margin-left:14px}
.tab.ec2{height:42px;width:270px;padding-left:13px}
.tab-active{width:273px;height:60px;margin:16px 13px 0 0;padding:10px 0 0 12px;display:flex;border:4px solid #c0307f;border-bottom:0;border-radius:10px 10px 0 0;background:#f3f3f3;color:#303235;font-weight:500;flex:none}
.tab-active .tab-text{width:161px}
.tab-active .close{margin:9px 0 0 18px}
.tab.iam{padding-left:13px;margin-right:30px}
.plus{margin-top:34px}
.chev{margin:41px 0 0 127px}

.toolbar{height:80px;display:flex;align-items:flex-start;padding-top:8px}
.nav-icons{width:530px;display:grid;grid-template-columns:64px 60px 317px 40px;padding:14px 0 0 34px}
.address{width:1471px;height:56px;border-radius:8px;background:#fff;display:flex;align-items:center;padding-left:28px;color:#6f7276}
.url{margin-left:24px;font:400 27.8px/56px Inter,sans-serif;white-space:nowrap;width:1146px;flex:none}
.host{color:#2c2e31}
.addr-icons{display:grid;grid-template-columns:65px 50px 24px 65px 38px;align-items:center;flex:none}
.vline{width:2px;height:32px;background:#b4b7ba}
.badged{position:relative}
.badge{position:absolute;left:20px;top:-2px;width:24px;height:24px;border-radius:12px;color:#fff;text-align:center;font:500 18px/24px Inter,sans-serif}
.slate{background:#5d6170}.orange{background:#f05d38}
.tri .badge{left:22px;top:-4px}
.ext{display:grid;grid-template-columns:64px 65px 65px 64px 78px 40px;align-items:center;height:56px;margin-left:179px;width:412px}
.vpn{width:97px;height:44px;margin-top:6px;border:2px solid #d0d2d9;border-radius:22px;display:flex;align-items:center;gap:9px;padding-left:12px;font:400 23.5px/40px Inter,sans-serif;color:#75787d}
.vpn i{width:12px;height:12px;border-radius:50%;background:#b0b1c4}
.update{width:164px;height:56px;margin-left:10px;border:2px solid #a9271b;border-radius:8px;background:#ecdfde;display:flex;align-items:center;padding-left:13px;color:#a9271b;font:500 25.5px/52px Inter,sans-serif}
.update span{width:114px;padding-top:2px}

.bookmarks{height:56px;display:grid;grid-template-columns:49px 251px 49px 243px 48px 258px 46px 245px 43px 254px 46px 253px 47px 100px;align-items:center;padding:0 0 16px 28px;font:400 23.5px/40px Inter,sans-serif;color:#303235;white-space:nowrap}
.pack{font-size:23.800px}
.kit{font:italic 900 23px/40px "Roboto","Inter",sans-serif;color:#000;letter-spacing:-1.500px}

/* AWS navigation */
.awsnav{height:67px;border-top:2px solid #d3d8dc;border-bottom:1px solid #4a5362;background:#252f3e;display:flex;align-items:center;color:#fff;font:500 18.4px/30px "Noto Sans",sans-serif;white-space:nowrap}
.aws{margin-left:28px;margin-top:0;overflow:visible}
.nsep{width:1px;height:36px;background:#414d5c}
.s1{margin-left:28px}
.grid9{margin-left:26px}
.services{margin-left:13px;width:98px}
.search{width:864px;height:48px;border:1px solid #879596;border-radius:3px;background:#171a1f;display:flex;align-items:center;padding:0 16px 0 18px;color:#95a5a6;font-weight:400}
.search em{margin-left:14px;flex:1;font-size:21px;padding-top:1px}
.search span{font-size:22px}
.nav-right{width:1090px;margin-left:658px;display:grid;grid-template-columns:51px 28px 53px 26px 52px 27px 101px 42px 26px 640px 20px;align-items:center;flex:none}
.account{font-size:19.3px}

/* page body */
.page{height:1358px;background:#fff;display:flex;overflow:hidden;flex:none}
.side{width:365px;height:114px;border-right:1px solid #ddd;padding-left:33px;flex:none}
.side-item{height:48px;line-height:48px;padding-top:1px;display:flex;align-items:center;gap:8px;white-space:nowrap}
.side-item a{letter-spacing:.1px}
.current{margin:-29px 0 0 -17px;font-weight:700;gap:0}
.current::before{content:"";width:8px;height:27px;margin:-5px 10px 0 0;background:#f29033}
.content{width:2413px;margin-left:40px;padding-top:21px;flex:none}
.title-row{height:61px;border-bottom:1px solid #ccc;display:flex;justify-content:space-between}
h1{font-size:45px;line-height:56px;letter-spacing:.07px}
.title-row svg{margin-top:8px}
.desc{padding-top:10px;line-height:30px;height:66px;white-space:nowrap;letter-spacing:.035px}
.actions{height:60px;width:2409px;display:flex;align-items:flex-start}
.btn{height:49px;border-radius:6px;font:700 22.4px/46px "Liberation Sans",Arial,sans-serif;padding:1px 0 0;margin:0;color:#444;text-align:center;white-space:nowrap}
.run{width:89px;margin-right:14px;border:1px solid #a9c0e0;background:linear-gradient(#cbdaee,#b5cae7);color:#fff;text-shadow:0 2px 2px rgba(0,0,0,.4)}
.off{border:1px solid #efefef;background:linear-gradient(#fcfcfc,#f2f2f2);color:#dedede}
.cancel{width:121px;margin-right:13px}.delete{width:116px}
.updated{margin-left:auto;margin-right:16px;line-height:30px;padding-top:17px;color:#999}
.btn-group{width:223px;height:49px;display:grid;grid-template-columns:74px 74px 73px;border:1px solid #bbb;border-radius:6px;background:linear-gradient(#fff,#dedede)}
.btn-group div{display:flex;align-items:center;justify-content:center;padding-right:1px}
.btn-group div+div{border-left:1px solid #bbb}
.table{width:2409px;border-top:1px solid #bcbcbc}
.filterbar{height:66px;border-bottom:1px solid #c2c2c2;background:linear-gradient(#f7f7f7,#e9e9e9);display:flex;padding:7px 7px 0 16px;justify-content:space-between}
.filter{width:774px;height:51px;border:1px solid #bbb;border-radius:6px;background:#fff;box-shadow:inset 0 3px 4px rgba(0,0,0,.1);display:flex;align-items:center;padding-left:12px;gap:9px;color:#666}
.pager{display:flex;height:49px}
.pager b{width:183px;text-align:center;line-height:46px;white-space:nowrap}
.pg{width:49px;border:1px solid #efefef;border-radius:6px;display:flex;align-items:center;justify-content:center;margin:0 0 0 7px}
.pager b+.pg{margin-left:0}
.row{display:grid;grid-template-columns:70px 42px repeat(6,328px) 329px}
.row>div{display:flex;align-items:center}
.check{padding-left:22px}
.check i{width:23px;height:22px;border:1px solid #777;border-radius:5px;background:#fff}
.caret{width:0;height:0;border:7.5px solid transparent;border-top:8.500px solid #444;border-bottom:0}
.head{height:64px;border-bottom:1px solid #c2c2c2;background:linear-gradient(#ebebeb,#dedede);font-weight:700}
.head>div{padding-top:5px;border-right:1px solid #bcbcbc;border-left:1px solid #f4f4f4}
.head>div:first-child{border-left:0}
.head>div:last-child{border-right:0}
.head .check{padding-top:6px}
.cell{padding-left:24px;white-space:nowrap}
.head .cell{padding-left:22px}
.head .cell .caret{margin-left:auto;margin-right:19px}
.data{height:49px;border-bottom:1px solid #c4c8cc;background:#f0f7fe}
.data .cell{padding-left:23px}
.tmpl{letter-spacing:.1px}
.data .check{padding-top:4px}
.expand{padding:3px 0 0 15px}
.sev{gap:6.2px}
.report svg{margin-right:7px}
.detail{height:904px;border-bottom:1px solid #c4c8cc;background:#f0f7fe;padding:24px 24px 0 23px}
h2{height:52px;border-bottom:1px solid #ccc;font-size:35.6px;line-height:46px;white-space:nowrap}
dl{padding-top:32px}
.pair{display:grid;grid-template-columns:432px 1fr;column-gap:24px;line-height:34px;padding-bottom:45.200px}
.rules{padding-bottom:44px}
.end{padding-bottom:22.2px}
dt{text-align:right;font-weight:700}
dd{letter-spacing:.1px}
.time{letter-spacing:-.2px}
.out{margin-left:-3px;letter-spacing:.05px}
.rules .out{margin-top:-1px;letter-spacing:.15px}
.detail-actions{display:flex;gap:6px}
.std{border:1px solid #b5b5b5;background:linear-gradient(#fff,#dcdcdc);text-shadow:0 1px 0 #fff}
.agents{width:243px}.status{width:179px}
.records{display:flex;justify-content:flex-end;align-items:flex-start;margin-top:32px;line-height:54px;gap:6px;white-space:nowrap}
.select{width:99px;height:54px;border:1px solid #bbb;border-radius:6px;box-shadow:inset 0 3px 4px rgba(0,0,0,.1);padding:0 8px 0 18px;margin-left:2px;display:flex;align-items:center;justify-content:space-between}
.records span:last-child{margin-left:-6px}

.foot{height:49px;border-top:1px solid #414b59;background:#252f3e;display:grid;grid-template-columns:33px 134px 122px 1692px 488px 102px 92px 165px;align-items:center;padding-left:26px;color:#fff;font:500 18.3px/30px "Noto Sans",sans-serif;white-space:nowrap;flex:none}

/* desktop picture and dock */
.wallpaper{height:64px;position:relative}
.dock{position:absolute;left:1060px;top:2px;width:760px;height:52px;border-radius:12px;background:linear-gradient(90deg,#bf7c64,#bb6e63 40%,#a86064 75%,#b5685c);box-shadow:inset 0 0 0 2px rgba(225,160,150,.6);overflow:hidden}
```
